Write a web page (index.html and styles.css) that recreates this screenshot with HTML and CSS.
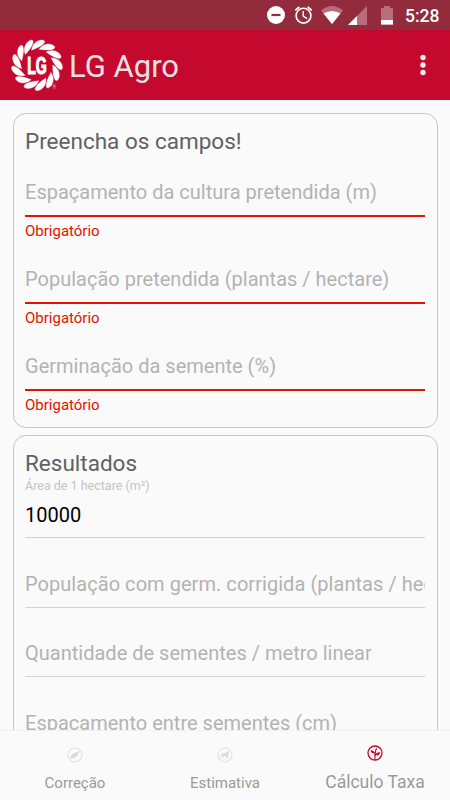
FILE: index.html
```html
<!DOCTYPE html>
<html lang="pt-BR">
<head>
<meta charset="utf-8">
<title>LG Agro</title>
<link rel="stylesheet" href="styles.css">
</head>
<body>
<div class="app">
  <div class="status">
    <svg class="status-icons" viewBox="0 0 130 30">
      <circle cx="11" cy="15" r="9" fill="#fff"/>
      <path d="M6.500 15h9" stroke="#922b3c" stroke-width="2.200"/>
      <g fill="none" stroke="#fff" stroke-width="1.600">
        <circle cx="38.500" cy="15.700" r="7.400"/>
        <path d="M38.200 11v5l4 2.600" stroke-width="1.400"/>
        <path d="M30.300 10.400l4-3.500M46.700 10.400l-4-3.500" stroke-width="1.900"/>
      </g>
      <path d="M56 10.500Q67 1.500 78 10.500L67 24Z" fill="#b96c79"/>
      <path d="M58.500 13.500Q67 8.500 75.500 13.500L67 24Z" fill="#fff"/>
      <path d="M102 6v19H83Z" fill="#b96c79"/>
      <path d="M92 16v9h-9Z" fill="#fff"/>
      <path d="M116 8h3V6h6v2h3v17h-12Z" fill="#b96c79"/>
      <path d="M116 20h12v4.500h-12Z" fill="#fff"/>
    </svg>
    <span class="clock">5:28</span>
  </div>
  <header class="bar">
    <svg class="logo" viewBox="0 0 52 52">
      <defs>
        <path id="petal" d="M20.500 11.200Q21.500 3.500 28.500 1.200Q34.500.2 33.500 3.600Q31 7.600 20.500 11.200Z"/>
      </defs>
      <g class="petals">
        <use href="#petal"/>
        <use href="#petal" transform="rotate(27.692 26 26)"/>
        <use href="#petal" transform="rotate(55.385 26 26)"/>
        <use href="#petal" transform="rotate(83.077 26 26)"/>
        <use href="#petal" transform="rotate(110.769 26 26)"/>
        <use href="#petal" transform="rotate(138.462 26 26)"/>
        <use href="#petal" transform="rotate(166.154 26 26)"/>
        <use href="#petal" transform="rotate(193.846 26 26)"/>
        <use href="#petal" transform="rotate(221.538 26 26)"/>
        <use href="#petal" transform="rotate(249.231 26 26)"/>
        <use href="#petal" transform="rotate(276.923 26 26)"/>
        <use href="#petal" transform="rotate(304.615 26 26)"/>
        <use href="#petal" transform="rotate(332.308 26 26)"/>
      </g>
      <text class="logo-text" transform="translate(16.200 34.500) scale(.59 1)">LG</text>
      <text class="logo-mark" x="41.500" y="49.500">®</text>
    </svg>
    <h1 class="app-name">LG Agro</h1>
    <svg class="more" viewBox="0 0 6 22" fill="#eee"><circle cx="3" cy="3.500" r="2.700"/><circle cx="3" cy="11" r="2.700"/><circle cx="3" cy="18.500" r="2.700"/></svg>
  </header>
  <main class="content">
    <section class="card">
      <h2 class="card-title">Preencha os campos!</h2>
      <div class="field"><div class="hint">Espaçamento da cultura pretendida (m)</div><div class="error">Obrigatório</div></div>
      <div class="field"><div class="hint">População pretendida (plantas / hectare)</div><div class="error">Obrigatório</div></div>
      <div class="field"><div class="hint">Germinação da semente (%)</div><div class="error">Obrigatório</div></div>
    </section>
    <section class="card results">
      <h2 class="card-title">Resultados</h2>
      <div class="label">Área de 1 hectare (m²)</div>
      <div class="value">10000</div>
      <div class="hint result long">População com germ. corrigida (plantas / hectare)</div>
      <div class="hint result">Quantidade de sementes / metro linear</div>
      <div class="hint result">Espaçamento entre sementes (cm)</div>
    </section>
  </main>
  <nav class="tabs">
    <div class="tab">
      <svg class="tab-icon" viewBox="0 0 16 16"><circle cx="8" cy="8" r="7" fill="none" stroke="#e2e2e2" stroke-width="1.200"/><path d="M3.500 12.200Q3.500 7 7 6.500L12.500 3.500L11.500 7L10.500 7.500L10.800 9L8.500 10L7.500 11.300Q5 11 3.500 12.200Z" fill="#dcdcdc"/></svg>
      <span>Correção</span>
    </div>
    <div class="tab">
      <svg class="tab-icon" viewBox="0 0 16 16"><circle cx="8" cy="8" r="7" fill="none" stroke="#e2e2e2" stroke-width="1.200"/><path d="M3 10Q5 5.500 8 6L12.500 3.500L11.500 7Q12 10 9.500 12.500L9 9L7 9.500L6 12L5.500 9.500Z" fill="#dcdcdc"/></svg>
      <span>Estimativa</span>
    </div>
    <div class="tab active">
      <svg class="tab-icon" viewBox="0 0 16 16"><circle cx="8" cy="8" r="7" fill="none" stroke="#c4082e" stroke-width="1.300"/><path d="M8 14Q7.500 10 8.700 5.500M8 11Q9 9 11 8.500M8 9Q7 7 5.500 6.500" fill="none" stroke="#c4082e" stroke-width="1.100"/><path d="M3.500 5.500Q6.500 4.500 7.300 8Q4 8.800 3.500 5.500ZM8.700 6Q7.500 4 9.500 2.500Q10.800 4.500 8.700 6ZM9 10Q9 6.800 13.300 7.300Q12.500 11.300 9 10Z" fill="#c4082e"/></svg>
      <span>Cálculo Taxa</span>
    </div>
  </nav>
</div>
</body>
</html>
```
FILE: styles.css
```css
* { box-sizing: border-box; }
body { margin: 0; font-family: Roboto, "Liberation Sans", sans-serif; background: #fafafa; }
h1, h2 { margin: 0; font-weight: 400; }
.app { display: flex; flex-direction: column; width: 450px; height: 800px; overflow: hidden; }
.status { flex: none; height: 30px; display: flex; justify-content: flex-end; align-items: center; padding-right: 10px; background: #922b3c; color: #fff; }
.status-icons { width: 130px; height: 30px; }
.clock { width: 35px; margin-left: 10px; padding-top: 1px; font-size: 17.5px; font-weight: 500; line-height: 30px; white-space: nowrap; }
.bar { flex: none; height: 70px; display: flex; align-items: center; padding: 0 24px 0 11px; background: #c4082e; }
.logo { width: 52px; height: 52px; }
.petals { fill: #fff; stroke: #fff; stroke-width: .3px; stroke-linejoin: round; }
.logo-text { font: 700 24px "Liberation Sans", sans-serif; fill: #fff; stroke: #fff; stroke-width: 1.2px; }
.logo-mark { font-size: 4.5px; fill: #f3b8c3; }
.app-name { flex: 1; margin-left: 6px; padding-top: 4px; font-size: 31px; line-height: 36px; color: #e8e0e1; }
.more { width: 6px; height: 22px; }
.content { flex: 1; min-height: 0; overflow: hidden; padding: 13px 12.5px 0; display: flex; flex-direction: column; gap: 7px; }
.card { flex: none; height: 315px; padding: 12px 11.5px 0; border: 1px solid #c6c6c6; border-radius: 13px; }
.card-title { height: 30px; font-size: 22.5px; line-height: 30px; color: #616161; }
.field { height: 87px; padding-top: 22px; }
.hint { font-size: 20px; line-height: 28px; letter-spacing: .01px; color: #b3b3b3; white-space: nowrap; overflow: hidden; }
.field .hint { height: 39px; border-bottom: 2px solid #e31300; }
.error { padding-top: 5px; font-size: 15px; line-height: 18px; color: #e31300; }
.results { height: 420px; }
.label { height: 15px; padding-top: 1px; font-size: 12.5px; line-height: 14px; color: #c4c4c4; }
.value { height: 45px; padding-top: 8px; font-size: 20px; line-height: 28px; color: #000; border-bottom: 1px solid #d2d2d2; }
.result { height: 69.5px; padding-top: 31.5px; border-bottom: 1px solid #d2d2d2; }
.long { letter-spacing: .05px; }
.tabs { flex: none; height: 70px; display: grid; grid-template-columns: repeat(3, 1fr); border-top: 1px solid #f0f0f0; background: #fafafa; color: #9a9a9a; }
.tab { display: flex; flex-direction: column; align-items: center; padding-top: 16px; font-size: 15px; line-height: 20px; }
.tab-icon { width: 16px; height: 16px; margin-bottom: 10px; }
.active { padding-top: 14px; font-size: 17.5px; }
.active .tab-icon { margin-bottom: 11px; }
```
